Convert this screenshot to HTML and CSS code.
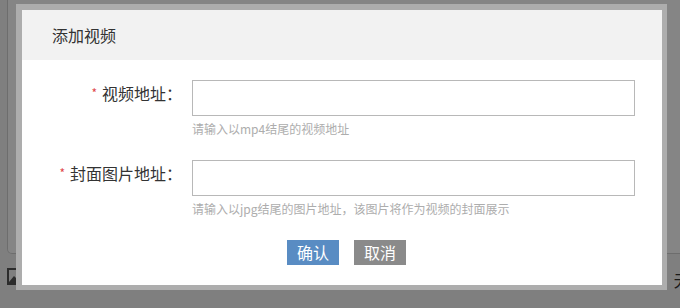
FILE: index.html
```html
<!DOCTYPE html>
<html lang="zh-CN">
<head>
<meta charset="utf-8">
<title>添加视频</title>
<link rel="stylesheet" href="styles.css">
</head>
<body>
<div class="page">
  <div class="panel"></div>
  <div class="toolbar">
    <svg class="pic-icon" width="18" height="17" viewBox="0 0 18 17">
      <rect x="1" y="1" width="16" height="15" fill="none" stroke="#555" stroke-width="2"/>
      <circle cx="11.5" cy="5.5" r="1.8" fill="#555"/>
      <path d="M2 14 L7 8 L11 12 L13 10 L16 13 L16 15 L2 15 Z" fill="#555"/>
    </svg>
    <span class="dash">—</span>
    <span class="bottom-text">无图片</span>
  </div>
</div>

<div class="mask"></div>

<div class="dialog">
  <div class="dialog-title">添加视频</div>
  <div class="dialog-body">
    <div class="form-item">
      <label class="form-label"><span class="req">*</span>视频地址：</label>
      <div class="form-field">
        <input class="form-input" type="text">
        <div class="form-tip">请输入以mp4结尾的视频地址</div>
      </div>
    </div>
    <div class="form-item">
      <label class="form-label"><span class="req">*</span>封面图片地址：</label>
      <div class="form-field">
        <input class="form-input" type="text">
        <div class="form-tip">请输入以jpg结尾的图片地址，该图片将作为视频的封面展示</div>
      </div>
    </div>
    <div class="form-actions">
      <button class="btn btn-primary" type="button">确认</button>
      <button class="btn btn-cancel" type="button">取消</button>
    </div>
  </div>
</div>
</body>
</html>
```

FILE: styles.css
```css
html, body {
  margin: 0;
  padding: 0;
  width: 680px;
  height: 308px;
  overflow: hidden;
}

body {
  background: #f4f4f4;
  font-family: "Microsoft YaHei", "Noto Sans CJK SC", "Noto Sans", sans-serif;
  color: #333;
}

.page {
  padding-left: 7px;
}

.panel {
  width: 720px;
  height: 253px;
  background: #fff;
  border: 1px solid #d2d2d2;
  border-top: none;
  border-radius: 0 0 5px 5px;
}

.toolbar {
  display: flex;
  align-items: flex-end;
  margin-top: 14px;
  width: 720px;
}

.pic-icon {
  display: block;
}

.dash {
  margin-left: 560px;
  font-size: 12px;
  line-height: 12px;
  color: #333;
  margin-bottom: -6px;
}

.bottom-text {
  margin-left: 78px;
  font-size: 16px;
  line-height: 18px;
  color: #333;
  margin-bottom: -4px;
}

.mask {
  position: fixed;
  inset: 0;
  background: rgba(0, 0, 0, 0.48);
}

.dialog {
  position: absolute;
  left: 16px;
  top: 4px;
  width: 640px;
  height: 275px;
  background: #fff;
  border-style: solid;
  border-color: #adadad;
  border-width: 6px 5px 5px 6px;
}

.dialog-title {
  height: 50px;
  line-height: 50px;
  padding-left: 30px;
  background: #f2f2f2;
  font-size: 16px;
  color: #333;
}

.dialog-body {
  padding-top: 20px;
}

.form-item {
  display: flex;
  align-items: flex-start;
  margin-bottom: 21px;
}

.form-label {
  width: 160px;
  margin-right: 10px;
  text-align: right;
  font-size: 16px;
  line-height: 26px;
  color: #333;
  white-space: nowrap;
}

.req {
  color: #e0474c;
  font-size: 12px;
  margin-right: 5px;
  vertical-align: 2px;
}

.form-field {
  display: flex;
  flex-direction: column;
}

.form-input {
  box-sizing: border-box;
  width: 443px;
  height: 36px;
  margin: 0;
  border: 1px solid #b8b8b8;
  outline: none;
  padding: 0 8px;
  background: #fff;
}

.form-tip {
  margin-top: 3px;
  font-size: 12px;
  line-height: 20px;
  color: #adadad;
}

.form-actions {
  display: flex;
  justify-content: center;
  gap: 15px;
  padding-left: 9px;
}

.btn {
  height: 25px;
  width: 52px;
  padding: 0;
  border: none;
  font-family: inherit;
  font-size: 16px;
  line-height: 25px;
  color: #fff;
  cursor: pointer;
}

.btn-primary {
  background: #598cc3;
}

.btn-cancel {
  background: #8a8a8a;
}
```
